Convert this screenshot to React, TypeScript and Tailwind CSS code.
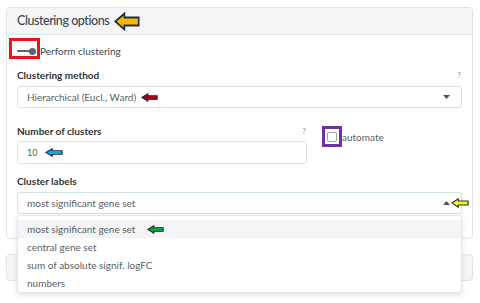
import type {ReactNode} from "react";

// Left-pointing block arrow used as a callout marker
function Arrow({fill, w, h, className = ""}: {fill: string; w: number; h: number; className?: string}) {
    return (
        <svg width={w} height={h} viewBox="0 0 40 24" preserveAspectRatio="none" className={className}>
            <path d="M2 12 L16 2 L16 7 L38 7 L38 17 L16 17 L16 22 Z" fill={fill} stroke="#1f2a44" strokeWidth="2.5"
                  strokeLinejoin="miter"/>
        </svg>
    );
}

function Caret({up = false}: {up?: boolean}) {
    return (
        <svg width="7" height="4" viewBox="0 0 7 4" className="shrink-0">
            <path d={up ? "M0 4 L3.5 0 L7 4 Z" : "M0 0 L3.5 4 L7 0 Z"} fill="#4a5160"/>
        </svg>
    );
}

function FieldLabel({children, help}: {children: ReactNode; help?: boolean}) {
    return (
        <div className="flex h-[14px] items-center justify-between">
            <span className="text-[10px] font-bold text-[#333]">{children}</span>
            {help && <span className="pr-[1px] text-[8px] font-bold text-[#8fb0b8]">?</span>}
        </div>
    );
}

const OPTIONS = [
    "most significant gene set",
    "central gene set",
    "sum of absolute signif. logFC",
    "numbers",
];

export default function App() {
    return (
        <div className="relative h-[303px] w-[480px] overflow-hidden bg-white px-[6px] pt-[7px] font-['Lato',sans-serif] text-[#555]">
            <div className="w-[467px] rounded-[4px] border border-[#e1e4e8]">
                <div className="flex h-[27px] items-center border-b border-[#e1e4e8] bg-[#f4f5f7] px-[10px]">
                    <span className="text-[12.5px] font-medium tracking-[-0.45px] text-[#3e4756]">Clustering options</span>
                    <Arrow fill="#f6b800" w={26} h={19} className="ml-[5px]"/>
                </div>

                <div className="px-[10px] pb-[24px]">
                    {/* switch */}
                    <div className="mt-[9px] flex h-[14px] items-center">
                        <div className="relative flex h-[14px] w-[23px] items-center">
                            <div className="h-[2px] w-[18px] rounded-full bg-[#5b6270]"/>
                            <div className="absolute left-[12px] h-[7px] w-[7px] rounded-full bg-[#5b6270]"/>
                            <div className="absolute -left-[8px] -top-[6px] h-[21px] w-[31px] border-[3px] border-[#e8141c]"/>
                        </div>
                        <span className="text-[10px] text-[#3e4756]">Perform clustering</span>
                    </div>

                    <div className="mt-[10px]">
                        <FieldLabel help>Clustering method</FieldLabel>
                    </div>
                    <div className="mt-[4px] flex h-[22px] items-center justify-between rounded-[3px] border border-[#dde1e6] pl-[9px] pr-[11px]">
                        <div className="flex items-center">
                            <span className="text-[10px] text-[#5a5f66]">Hierarchical (Eucl., Ward)</span>
                            <Arrow fill="#a3001c" w={17} h={9} className="ml-[5px]"/>
                        </div>
                        <Caret/>
                    </div>

                    <div className="mt-[16px] flex">
                        <div className="w-[290px]">
                            <FieldLabel help>Number of clusters</FieldLabel>
                            <div className="mt-[3px] flex h-[23px] items-center rounded-[3px] border border-[#dde1e6] pl-[9px]">
                                <span className="text-[9px] text-[#5a5f66]">10</span>
                                <Arrow fill="#1aa3e0" w={18} h={9} className="ml-[8px]"/>
                            </div>
                        </div>
                        <div className="relative ml-[20px] mt-[7px] flex h-[12px] items-center">
                            <div className="h-[10px] w-[10px] rounded-[2px] border border-[#9a9fa8] bg-white"/>
                            <span className="ml-[5px] text-[10px] text-[#5a5f66]">automate</span>
                            <div className="absolute -left-[5px] -top-[5px] h-[21px] w-[20px] border-[3px] border-[#7030a0]"/>
                        </div>
                    </div>

                    <div className="mt-[10px]">
                        <FieldLabel>Cluster labels</FieldLabel>
                    </div>
                    <div className="relative mt-[4px] flex h-[22px] items-center justify-between rounded-[3px] border border-[#cfe2df] pl-[9px] pr-[11px]">
                        <span className="text-[10px] text-[#5a5f66]">most significant gene set</span>
                        <Caret up/>
                        <Arrow fill="#ffff00" w={18} h={10} className="absolute -right-[8px] top-[5px]"/>
                    </div>
                </div>
            </div>

            {/* next collapsed panel */}
            <div className="mt-[15px] h-[27px] w-[467px] rounded-[4px] border border-[#e1e4e8] bg-[#f4f5f7]"/>

            {/* open dropdown menu */}
            <div className="absolute left-[17px] top-[215px] h-[78px] w-[445px] rounded-[3px] border border-[#e3e6ea] bg-white pt-[4px] shadow-[0_2px_5px_rgba(0,0,0,0.12)]">
                {OPTIONS.map((opt, i) => (
                    <div key={opt}
                         className={`flex h-[18px] items-center pl-[9px] text-[10px] text-[#5a5f66] ${i === 0 ? "bg-[#f3f4f6]" : ""}`}>
                        <span>{opt}</span>
                        {i === 0 && <Arrow fill="#12a03c" w={17} h={9} className="ml-[12px]"/>}
                    </div>
                ))}
            </div>
        </div>
    );
}
